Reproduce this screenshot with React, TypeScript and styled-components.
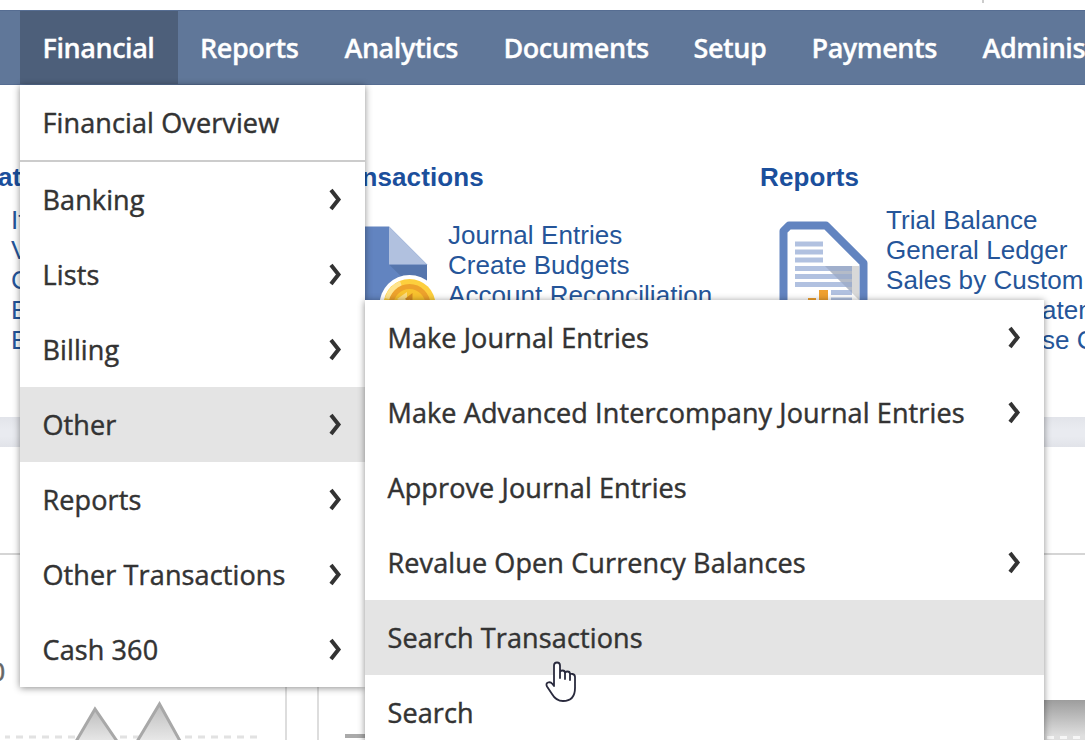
import React from 'react';
import styled, { createGlobalStyle } from 'styled-components';

const GlobalStyle = createGlobalStyle`
  * { box-sizing: border-box; }
  body { margin: 0; background: #fff; overflow: hidden; }
`;

const Page = styled.div`
  position: relative;
  width: 1085px;
  height: 740px;
  overflow: hidden;
  display: flex;
  flex-direction: column;
  background: #fff;
  font-family: 'Liberation Sans', Arial, sans-serif;
`;

const TopStrip = styled.div`
  flex: none;
  height: 10px;
  padding-left: 982px;
`;

const Tick = styled.div`
  width: 2px;
  height: 3px;
  background: #ccc;
`;

const NavBar = styled.nav`
  flex: none;
  display: flex;
  height: 75px;
  padding-left: 20px;
  background: #607799;
  border-top: 1px solid #566d92;
  border-bottom: 1px solid #566d92;
`;

const NavItem = styled.a<{ $width: number; $active?: boolean }>`
  flex: none;
  width: ${(p) => p.$width}px;
  padding-left: 22.5px;
  background: ${(p) => (p.$active ? '#4d5f7a' : 'transparent')};
  color: #fff;
  font: 600 27px/73px 'Open Sans', sans-serif;
  letter-spacing: -0.45px;
  -webkit-text-stroke: 0.3px #fff;
  white-space: nowrap;
`;

const Shortcuts = styled.section`
  flex: none;
  display: grid;
  grid-template-columns: repeat(3, 438px);
  height: 332px;
  margin-left: -116px;
  padding-top: 77px;
`;

const Group = styled.div`
  display: flex;
  flex-direction: column;
`;

const GroupTitle = styled.h2<{ $indent?: number }>`
  margin: 0;
  padding-left: ${(p) => p.$indent ?? 0}px;
  font-size: 26px;
  line-height: 30px;
  font-weight: 700;
  letter-spacing: 0.12px;
  color: #1b4f9c;
  white-space: nowrap;
`;

const GroupBody = styled.div`
  display: flex;
  align-items: center;
  height: 150px;
  margin-top: 13px;
`;

const IconSlot = styled.div`
  flex: none;
  width: 126px;
  height: 124px;
  padding-left: 18px;
`;

const Links = styled.div`
  display: flex;
  flex-direction: column;
`;

const Link = styled.a<{ $indent?: number }>`
  height: 30px;
  padding-left: ${(p) => p.$indent ?? 0}px;
  font-size: 26px;
  line-height: 30px;
  letter-spacing: 0.06px;
  color: #255599;
  white-space: nowrap;
`;

const Band = styled.div`
  flex: none;
  height: 30px;
  background: linear-gradient(#e2e4ea, #e9ebf0 40%, #e9ebf0 65%, #e1e3e9);
`;

const CardHeader = styled.div`
  flex: none;
  height: 108px;
  border-bottom: 2px solid #d5d5d5;
`;

const Cards = styled.div`
  flex: 1;
  display: grid;
  grid-template-columns: 287px 1fr;
  column-gap: 30px;
`;

const Card = styled.div<{ $side: 'left' | 'right' }>`
  display: flex;
  justify-content: space-between;
  border-left: ${(p) => (p.$side === 'right' ? '2px solid #ddd' : 'none')};
  border-right: ${(p) => (p.$side === 'left' ? '2px solid #ddd' : 'none')};
`;

const Figure = styled.span`
  width: 14px;
  margin-left: -9px;
  padding-top: 102px;
  font-size: 25px;
  line-height: 30px;
  color: #666;
  -webkit-text-stroke: 0.5px #666;
`;

const ChartLine = styled.svg`
  display: block;
  align-self: flex-end;
`;

const Dash = styled.div`
  align-self: flex-end;
  width: 30px;
  height: 4px;
  margin: 0 0 2px 26px;
  background: #aaa;
`;

const Bar = styled.div`
  align-self: flex-end;
  width: 60px;
  height: 40px;
  background: linear-gradient(#9d9d9d, #dfdfdf 90%);
`;

const Menu = styled.div<{ $x: number; $y: number; $width: number }>`
  position: absolute;
  left: ${(p) => p.$x}px;
  top: ${(p) => p.$y}px;
  width: ${(p) => p.$width}px;
  background: #fff;
  box-shadow: 0 1px 7px rgba(0, 0, 0, 0.45);
`;

const MenuItem = styled.div<{ $active?: boolean; $ruled?: boolean }>`
  display: flex;
  align-items: center;
  justify-content: space-between;
  height: ${(p) => (p.$ruled ? 77 : 75)}px;
  padding: 0 23px 0 22.5px;
  background: ${(p) => (p.$active ? '#e4e4e4' : '#fff')};
  border-bottom: ${(p) => (p.$ruled ? '2px solid #ccc' : 'none')};
  color: #333;
  font: 400 27px/75px 'Open Sans', sans-serif;
  letter-spacing: 0.12px;
  -webkit-text-stroke: 0.45px #333;
  white-space: nowrap;
`;

const Pointer = styled.svg`
  position: absolute;
  left: 544px;
  top: 660px;
`;

const Chevron = () => (
  <svg width="13" height="24" viewBox="0 0 13 24">
    <path d="M2 2 L9.500 11.500 L2 21" fill="none" stroke="#333" strokeWidth="4" />
  </svg>
);

const CoinDocument = () => (
  <svg width="104" height="120" viewBox="0 0 104 120">
    <path d="M2 8.500H49L87 46.500V118H2Z" fill="#6284c0" />
    <path d="M49 46.500H87V70H73Z" fill="#5676ad" />
    <path d="M49 8.500L87 46.500H49Z" fill="#b1c1df" />
    <circle cx="69.500" cy="87" r="30" fill="#fff" />
    <circle cx="69.500" cy="87" r="26" fill="#fdcf3d" />
    <path d="M45 80A26 26 0 0 1 60 63L69 87Z" fill="#fee48e" />
    <circle cx="69.500" cy="87" r="18.500" fill="#f8c22e" stroke="#eda22c" strokeWidth="5" />
    <path d="M57 81L67 74V87Z" fill="#fbdc83" />
    <path d="M66 82L71 78V92" fill="none" stroke="#d78c20" strokeWidth="3" />
  </svg>
);

const ReportDocument = () => (
  <svg width="92" height="120" viewBox="0 0 92 120">
    <path d="M5.500 118V13L11 7.500H48L85.500 45V118Z" fill="#fff" stroke="#6284c0" strokeWidth="8" strokeLinejoin="round" />
    <path d="M47 48H81V82Z" fill="#d8d8d8" />
    <g stroke="#b1c1e0" strokeWidth="5">
      <path d="M17 26H45M17 34H45M17 42H45M17 50.500H74M17 58.500H74M17 66.500H74M53 74.500H74M53 82H74" />
    </g>
    <path d="M47 48H74V75Z" fill="#8f9db8" opacity=".5" />
    <path d="M41 72H50V110H41ZM30 80H38V110H30Z" fill="#efa02e" />
  </svg>
);

const nav: [string, number][] = [
  ['Financial', 157.5],
  ['Reports', 144.5],
  ['Analytics', 159],
  ['Documents', 190],
  ['Setup', 118],
  ['Payments', 171],
  ['Adminis', 125],
];

const financial: [string, boolean][] = [
  ['Financial Overview', false],
  ['Banking', true],
  ['Lists', true],
  ['Billing', true],
  ['Other', true],
  ['Reports', true],
  ['Other Transactions', true],
  ['Cash 360', true],
];

const other: [string, boolean][] = [
  ['Make Journal Entries', true],
  ['Make Advanced Intercompany Journal Entries', true],
  ['Approve Journal Entries', false],
  ['Revalue Open Currency Balances', true],
  ['Search Transactions', false],
  ['Search', false],
];

export default function App() {
  return (
    <Page>
      <GlobalStyle />
      <TopStrip>
        <Tick />
      </TopStrip>
      <NavBar>
        {nav.map(([label, width], i) => (
          <NavItem key={label} $width={width} $active={i === 0}>
            {label}
          </NavItem>
        ))}
      </NavBar>

      <Shortcuts>
        <Group>
          <GroupTitle $indent={114}>at</GroupTitle>
          <GroupBody>
            <IconSlot />
            <Links>
              <Link $indent={1}>It</Link>
              <Link $indent={1}>V</Link>
              <Link $indent={1}>C</Link>
              <Link $indent={1}>E</Link>
              <Link $indent={1}>E</Link>
            </Links>
          </GroupBody>
        </Group>
        <Group>
          <GroupTitle>Transactions</GroupTitle>
          <GroupBody>
            <IconSlot>
              <CoinDocument />
            </IconSlot>
            <Links>
              <Link>Journal Entries</Link>
              <Link>Create Budgets</Link>
              <Link>Account Reconciliation</Link>
              <Link />
            </Links>
          </GroupBody>
        </Group>
        <Group>
          <GroupTitle>Reports</GroupTitle>
          <GroupBody>
            <IconSlot>
              <ReportDocument />
            </IconSlot>
            <Links>
              <Link>Trial Balance</Link>
              <Link>General Ledger</Link>
              <Link>Sales by Custom</Link>
              <Link $indent={156}>atem</Link>
              <Link $indent={156}>se C</Link>
            </Links>
          </GroupBody>
        </Group>
      </Shortcuts>

      <Band />
      <CardHeader />
      <Cards>
        <Card $side="left">
          <Figure>0</Figure>
          <ChartLine width="280" height="60" viewBox="0 0 280 60">
            <defs>
              <linearGradient id="peak" x1="0" y1="0" x2="0" y2="1">
                <stop offset="0" stopColor="#bdbdbd" />
                <stop offset="1" stopColor="#f3f3f3" />
              </linearGradient>
            </defs>
            <path d="M-2 57H256" stroke="#e2e2e2" strokeWidth="3" strokeDasharray="7 6" />
            <path d="M66 70L90 29L118 70Z" fill="url(#peak)" stroke="#a8a8a8" strokeWidth="3" />
            <path d="M127 70L154.500 24L180 70Z" fill="url(#peak)" stroke="#a8a8a8" strokeWidth="3" />
          </ChartLine>
        </Card>
        <Card $side="right">
          <Dash />
          <Bar>
            <ChartLine width="60" height="40" viewBox="0 0 60 40">
              <path d="M22 37.500H60" stroke="#f6f6f6" strokeWidth="3" strokeDasharray="7 6" />
            </ChartLine>
          </Bar>
        </Card>
      </Cards>

      <Menu $x={20} $y={85} $width={345}>
        {financial.map(([label, nested], i) => (
          <MenuItem key={label} $ruled={i === 0} $active={label === 'Other'}>
            {label}
            {nested && <Chevron />}
          </MenuItem>
        ))}
      </Menu>
      <Menu $x={365} $y={300} $width={679}>
        {other.map(([label, nested]) => (
          <MenuItem key={label} $active={label === 'Search Transactions'}>
            {label}
            {nested && <Chevron />}
          </MenuItem>
        ))}
      </Menu>

      <Pointer width="34" height="44" viewBox="0 0 34 44">
        <path
          d="M10 24V5.500Q10 2.500 13 2.500T16 5.500V18V12.500Q16 10.500 18.500 10.500T21 13V19V13.500Q21 11.500 23.500 11.500T26 14V20V15Q26 13.500 28.500 14T31 17V28Q31 41 19 41Q12 41 8 34L3 26.500Q1.500 23.500 4 22.500T8.500 24L10 26Z"
          fill="#fff"
          stroke="#292a3d"
          strokeWidth="1.800"
          strokeLinejoin="round"
        />
      </Pointer>
    </Page>
  );
}
